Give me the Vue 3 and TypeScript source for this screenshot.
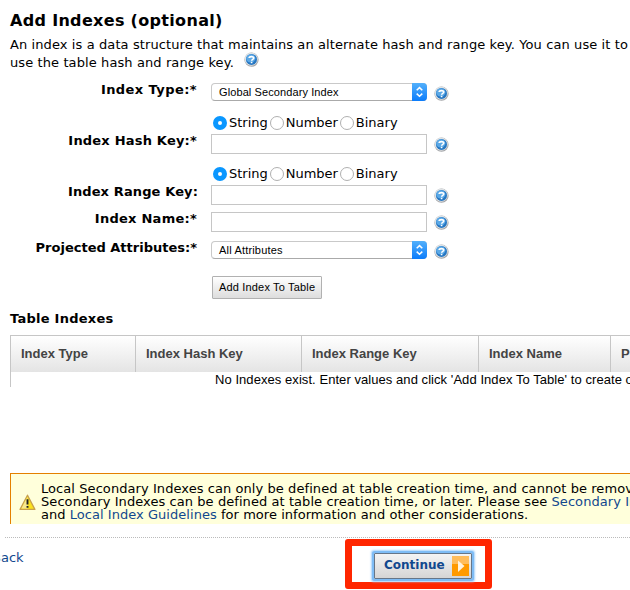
<script setup lang="ts">
import { ref } from 'vue'
import { h, type FunctionalComponent } from 'vue'

const HelpIcon: FunctionalComponent = () =>
  h('svg', { width: 15, height: 15, viewBox: '0 0 15 15', style: 'display:block' }, [
    h('circle', { cx: 7.5, cy: 7.7, r: 7.1, fill: '#a3a5a8' }),
    h('circle', { cx: 7.2, cy: 7.1, r: 6.6, fill: '#dfe3e6' }),
    h('circle', { cx: 7.5, cy: 7.4, r: 5.5, fill: '#2576c2' }),
    h('ellipse', { cx: 6.8, cy: 6.4, rx: 4.6, ry: 4.2, fill: '#5aa8e6' }),
    h('path', {
      d: 'M5.1 6C5.3 4.2 9.8 4.1 9.8 6C9.8 7.5 7.7 7.2 7.6 8.8M7.6 9.7V11.3',
      fill: 'none',
      stroke: '#fff',
      'stroke-width': 1.6,
    }),
  ])

const types: string[] = ['String', 'Number', 'Binary']
const hashType = ref('String')
const rangeType = ref('String')
const hashKey = ref('')
const rangeKey = ref('')
const indexName = ref('')
const columns: string[] = ['Index Type', 'Index Hash Key', 'Index Range Key', 'Index Name', 'Projected Attributes']
</script>

<template>
  <main class="page">
    <h1>Add Indexes (optional)</h1>
    <div class="intro">
      <div class="intro-a">An index is a data structure that maintains an alternate hash and range key. You can use it to</div>
      <div class="intro-b"><span>use the table hash and range key.</span><HelpIcon class="intro-help" /></div>
    </div>

    <form class="form" @submit.prevent>
      <div class="row row-type">
        <label class="l-type">Index Type:*</label>
        <div class="select"><span class="s-global">Global Secondary Index</span><i><svg width="15" height="18" viewBox="0 0 15 18"><path d="M4.7 7.3L7.5 4.6L10.3 7.3M4.7 10.6L7.5 13.3L10.3 10.6" /></svg></i></div>
        <HelpIcon class="help" />
      </div>
      <div class="radios">
        <label v-for="t in types" :key="t" @click="hashType = t"><b :class="{ on: hashType === t }"></b><span>{{ t }}</span></label>
      </div>
      <div class="row row-hash">
        <label class="l-hash">Index Hash Key:*</label>
        <input v-model="hashKey" type="text" />
        <HelpIcon class="help" />
      </div>
      <div class="radios">
        <label v-for="t in types" :key="t" @click="rangeType = t"><b :class="{ on: rangeType === t }"></b><span>{{ t }}</span></label>
      </div>
      <div class="row row-range">
        <label class="l-range">Index Range Key:</label>
        <input v-model="rangeKey" type="text" />
        <HelpIcon class="help" />
      </div>
      <div class="row row-name">
        <label class="l-name">Index Name:*</label>
        <input v-model="indexName" type="text" />
        <HelpIcon class="help" />
      </div>
      <div class="row row-attr">
        <label class="l-attr">Projected Attributes:*</label>
        <div class="select"><span class="s-all">All Attributes</span><i><svg width="15" height="18" viewBox="0 0 15 18"><path d="M4.7 7.3L7.5 4.6L10.3 7.3M4.7 10.6L7.5 13.3L10.3 10.6" /></svg></i></div>
        <HelpIcon class="help" />
      </div>
      <button type="button" class="add">Add Index To Table</button>
    </form>

    <h2>Table Indexes</h2>
    <section class="table">
      <div class="thead"><div v-for="c in columns" :key="c"><span>{{ c }}</span></div></div>
      <div class="empty">No Indexes exist. Enter values and click 'Add Index To Table' to create one.</div>
    </section>

    <section class="notice">
      <svg width="17" height="17" viewBox="0 0 17 17">
        <path d="M8.5 1.2L15.9 15.4H1.1Z" fill="#fbe21c" stroke="#c8a04c" stroke-width="1.3" stroke-linejoin="round" />
        <path d="M8.5 2.8L2.4 14.4H8.5Z" fill="#f8e890" />
        <path d="M8.5 5.2V10.6M8.5 12V13.8" stroke="#222" stroke-width="1.9" />
      </svg>
      <div class="lines">
        <div class="n1">Local Secondary Indexes can only be defined at table creation time, and cannot be removed</div>
        <div class="n2">Secondary Indexes can be defined at table creation time, or later. Please see <a>Secondary Index</a></div>
        <div class="n3">and <a>Local Index Guidelines</a> for more information and other considerations.</div>
      </div>
    </section>

    <footer>
      <a class="back">Back</a>
      <div class="mark">
        <button type="button" class="continue">
          <span>Continue</span>
          <svg width="17" height="20" viewBox="0 0 17 20"><rect width="17" height="20" fill="#ff9a00" /><rect width="17" height="8" fill="#ffbd5c" /><path d="M6 4.5L12.5 10L6 16Z" fill="#fff3df" /></svg>
        </button>
      </div>
    </footer>
  </main>
</template>

<style>
body { margin: 0; background: #fff; overflow: hidden; }
</style>

<style scoped>
.page { width: 630px; height: 590px; overflow: hidden; display: flex; flex-direction: column; font: 13px/18px Verdana, "DejaVu Sans", sans-serif; color: #000; white-space: nowrap; }
.page > * { flex-shrink: 0; }
h1 { margin: 0; padding: 10px 0 0 10px; height: 27px; box-sizing: border-box; font-size: 16px; line-height: 21px; letter-spacing: 0.32px; }
.intro { padding: 9px 0 0 10px; height: 47px; box-sizing: border-box; letter-spacing: 0.1px; }
.intro-b { display: flex; }
.intro-help { margin: -2px 0 0 10px; }
.form { height: 231px; }
.row { display: flex; align-items: flex-start; }
.row > label { width: 197px; margin: -2px 14px 0 0; text-align: right; font-weight: bold; line-height: 18px; flex: none; }
.row > .l-type { letter-spacing: 0.42px; }
.row > .l-hash { letter-spacing: 0.2px; }
.row > .l-range { letter-spacing: 0.12px; width: 198px; margin-right: 13px; }
.row > .l-name { letter-spacing: 0.25px; }
.row-type { padding-top: 9px; height: 42px; box-sizing: border-box; }
.row-hash { height: 33px; margin-top: 4px; }
.row-range { height: 27px; margin-top: 4px; }
.row-name { height: 29px; }
.row-attr { height: 35px; }
.help { margin: 3px 0 0 7px; }
input { width: 216px; height: 20px; box-sizing: border-box; border: 1px solid #c6c6c6; padding: 0 4px; margin: 0; background: #fff; outline: 0; border-radius: 0; }
.select { width: 216px; height: 18px; box-sizing: border-box; border: 1px solid #c9c9c9; border-bottom-color: #aaa; border-radius: 4px; display: flex; justify-content: space-between; font: 11px/17px "Liberation Sans", Arial, sans-serif; padding-left: 7px; }
.s-global { letter-spacing: 0.1px; }
.s-all { letter-spacing: 0.18px; }
.select i { width: 15px; height: 18px; margin: -1px -1px 0 0; border-radius: 0 4px 4px 0; background: linear-gradient(#53b0fb, #0b7cfb); }
.select svg { display: block; }
.select path { fill: none; stroke: #fff; stroke-width: 1.5; }
.radios { display: flex; height: 14px; padding-left: 213px; gap: 1.9px; }
.radios label { display: flex; align-items: center; }
.radios b { width: 14px; height: 14px; box-sizing: border-box; border: 1px solid #b0b0b0; border-radius: 50%; margin-right: 2px; background: #fff; }
.radios b.on { border: 5px solid #0a97ff; }
.add { display: block; margin: 0 0 0 212px; width: 110px; height: 23px; box-sizing: border-box; border: 1px solid #b1b1b1; border-radius: 1px; background: linear-gradient(#fff, #ddd); font: 11px/20px "Liberation Sans", Arial, sans-serif; letter-spacing: 0.17px; padding: 0 0 1px 6px; text-align: left; color: #000; }
h2 { margin: 0; padding: 5px 0 0 10px; height: 30px; box-sizing: border-box; font-size: 13px; line-height: 18px; letter-spacing: 0.25px; }
.table { margin-left: 10px; border-left: 1px solid #c6c6c6; width: 640px; height: 52px; font-family: "Liberation Sans", Arial, sans-serif; }
.thead { display: grid; grid-template-columns: 125px 166px 177px 132px 150px; height: 37px; box-sizing: border-box; border-top: 1px solid #c6c6c6; background: linear-gradient(#fff, #e4e4e4); color: #444; font-weight: bold; line-height: 35px; }
.thead div { border-right: 1px solid #c6c6c6; padding-left: 10px; }
.empty { padding-left: 204px; line-height: 16px; letter-spacing: 0.06px; }
.notice { margin: 86px 0 0 10px; width: 640px; height: 51px; box-sizing: border-box; border-top: 1px solid #e48000; border-left: 1px solid #e48000; background: #ffffdb; display: flex; overflow: hidden; }
.notice svg { margin: 20px 5px 0 8px; flex: none; }
.lines { padding-top: 8px; line-height: 13px; letter-spacing: 0.07px; }
.n3 { letter-spacing: 0.04px; }
a { color: #11488e; }
footer { margin: 13px 0 0 5px; height: 52px; border-top: 1px dotted #bbb; display: flex; }
.back { margin: 11px 0 0 -13px; width: 33px; }
.mark { margin: 1px 0 0 320px; width: 147px; height: 50px; box-sizing: border-box; border: 7px solid #ff2600; border-radius: 3px; padding: 7px 0 0 22px; }
.continue { width: 98px; height: 26px; box-sizing: border-box; border: 1px solid #667688; border-radius: 1px; background: linear-gradient(#f4f4f4, #d5d5d5); box-shadow: 0 0 0 2px #7ebcf5, 0 0 2px 3px #a9d3fa; display: flex; align-items: center; padding: 0 2px 0 9px; justify-content: space-between; font: bold 12px/18px Verdana, "DejaVu Sans", sans-serif; color: #11488e; }
.continue span { padding-bottom: 2px; }
</style>
